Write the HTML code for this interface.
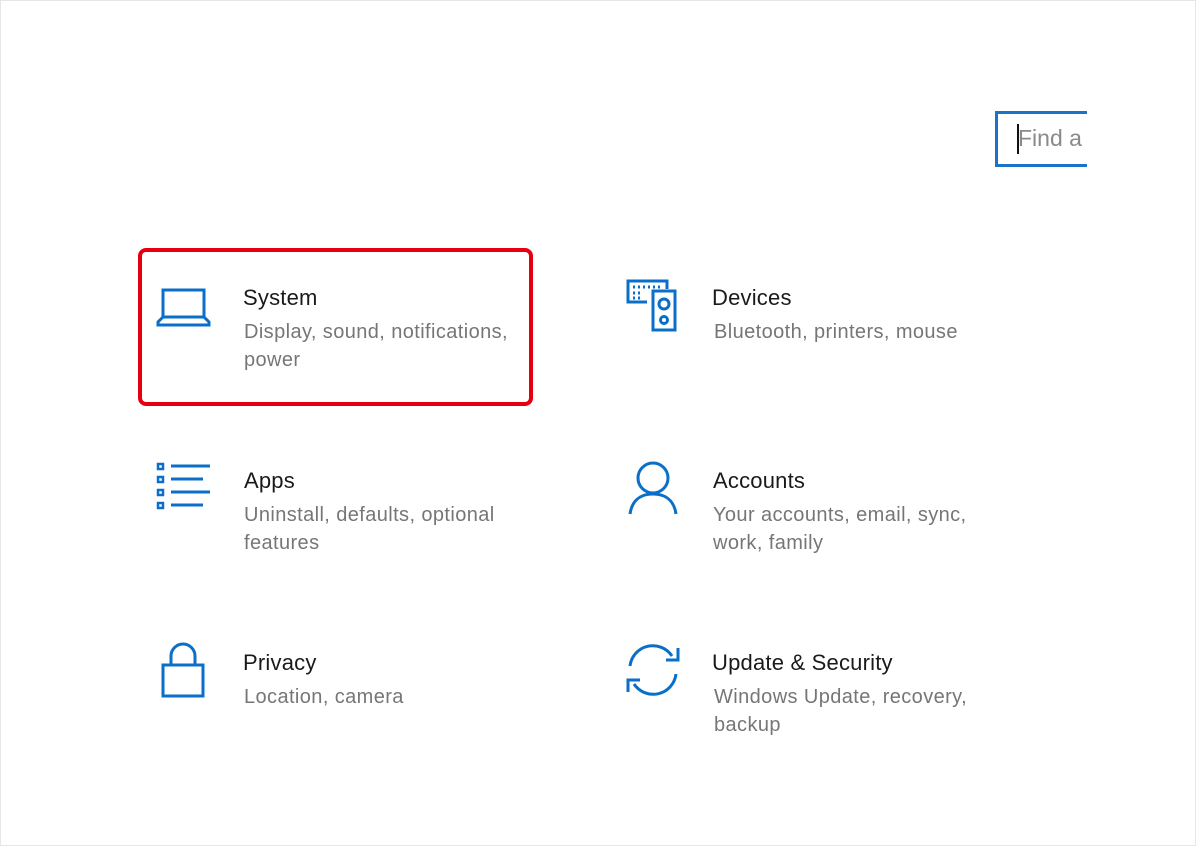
<!DOCTYPE html>
<html><head><style>
body{margin:0;width:1196px;height:846px;background:#fff;font-family:"Liberation Sans",sans-serif;position:relative;overflow:hidden}
.frame{position:absolute;left:0;top:0;width:1194px;height:844px;border:1px solid #e6e6e6}
.t{position:absolute;font-size:22px;color:#1a1a1a;letter-spacing:0.2px}
.s{position:absolute;font-size:20px;color:#767676;line-height:28px;letter-spacing:0.4px}
svg{position:absolute;fill:none;stroke:#0a6fc9;stroke-width:3}
.search{position:absolute;left:995px;top:111px;width:89px;height:50px;border:3px solid #1a73c6;border-right:none}
.search span{position:absolute;left:20px;top:11px;font-size:23px;color:#8a8a8a}
.search i{position:absolute;left:19px;top:10px;width:2px;height:30px;background:#111}
.red{position:absolute;left:138px;top:248px;width:387px;height:150px;border:4px solid #e4000f;border-radius:8px}
</style></head><body>
<div class="frame"></div>
<div class="search"><i></i><span>Find a</span></div>
<div class="red"></div>

<svg style="left:155px;top:287px" width="58" height="42" viewBox="0 0 58 42"><rect x="8" y="3" width="41" height="27"/><path d="M8 30 L3 35 V38 H54 V35 L49 30"/></svg>
<div class="t" style="left:243px;top:285px">System</div>
<div class="s" style="left:244px;top:318px">Display, sound, notifications,<br>power</div>

<svg style="left:625px;top:278px" width="56" height="56" viewBox="0 0 56 56" stroke-width="2.5"><path d="M22 24 H3 V3 H42 V11"/><path d="M8 9h2M13 9h2M18 9h2M23 9h2M28 9h2M33 9h2M8 15h2M13 15h2M8 20h2M13 20h2"/><rect x="28" y="13" width="22" height="39"/><circle cx="39" cy="26" r="5"/><circle cx="39" cy="42" r="3.5"/></svg>
<div class="t" style="left:712px;top:285px">Devices</div>
<div class="s" style="left:714px;top:318px">Bluetooth, printers, mouse</div>

<svg style="left:155px;top:460px" width="58" height="54" viewBox="0 0 58 54"><rect x="3" y="4" width="5" height="5" stroke-width="2.5"/><rect x="3" y="17" width="5" height="5" stroke-width="2.5"/><rect x="3" y="30" width="5" height="5" stroke-width="2.5"/><rect x="3" y="43" width="5" height="5" stroke-width="2.5"/><path d="M16 6H55M16 19H48M16 32H55M16 45H48"/></svg>
<div class="t" style="left:244px;top:468px">Apps</div>
<div class="s" style="left:244px;top:501px">Uninstall, defaults, optional<br>features</div>

<svg style="left:625px;top:458px" width="56" height="60" viewBox="0 0 56 60"><circle cx="28" cy="20" r="15"/><path d="M5 56 C7 42 16 36 28 36 C40 36 49 42 51 56"/></svg>
<div class="t" style="left:713px;top:468px">Accounts</div>
<div class="s" style="left:713px;top:501px">Your accounts, email, sync,<br>work, family</div>

<svg style="left:158px;top:640px" width="50" height="60" viewBox="0 0 50 60"><rect x="5" y="25" width="40" height="31"/><path d="M13 25 V16 A12 12 0 0 1 37 16 V25"/></svg>
<div class="t" style="left:243px;top:650px">Privacy</div>
<div class="s" style="left:244px;top:683px">Location, camera</div>

<svg style="left:622px;top:640px" width="62" height="60" viewBox="0 0 62 60"><path d="M8 26 A23 23 0 0 1 50 16"/><path d="M56 8 V20 H44"/><path d="M54 34 A23 23 0 0 1 12 44"/><path d="M6 52 V40 H18"/></svg>
<div class="t" style="left:712px;top:650px">Update &amp; Security</div>
<div class="s" style="left:714px;top:683px">Windows Update, recovery,<br>backup</div>
</body></html>
